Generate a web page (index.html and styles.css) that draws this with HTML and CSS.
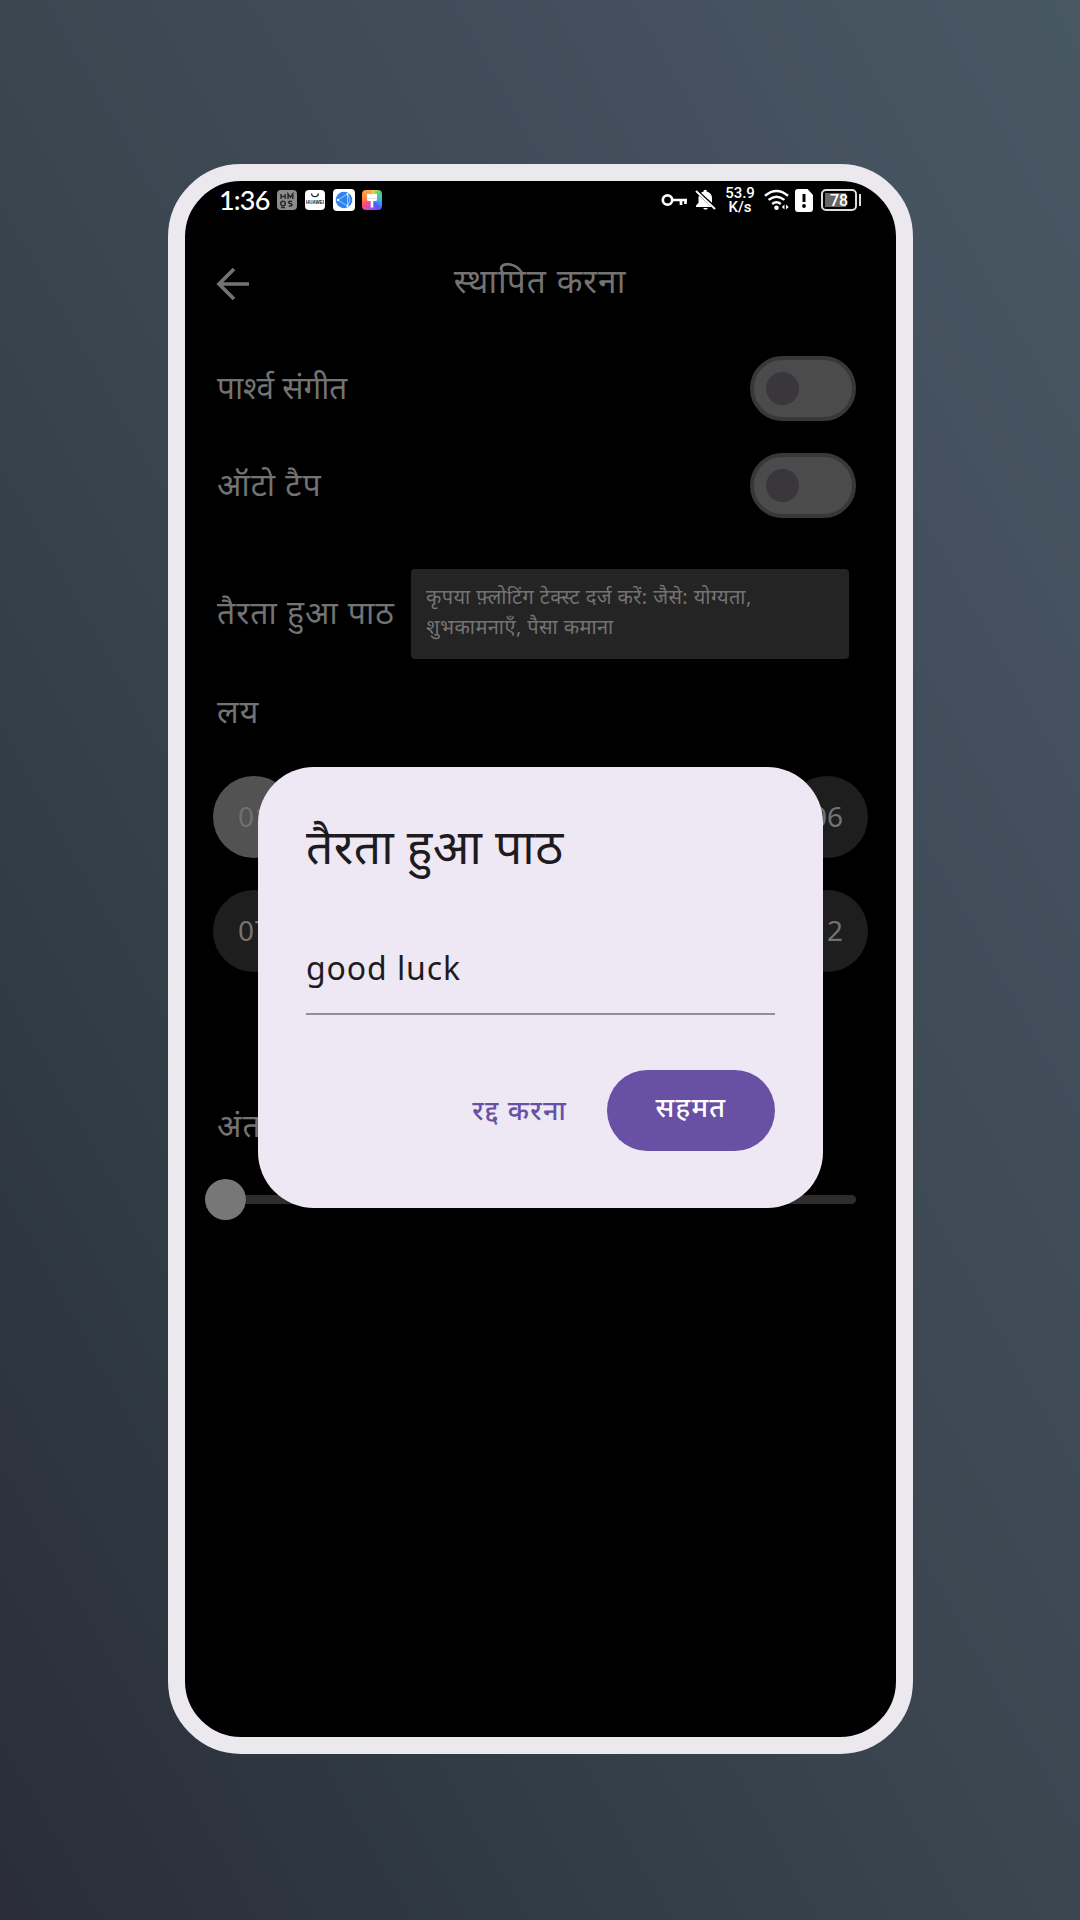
FILE: index.html
```html
<!DOCTYPE html>
<html lang="hi">
<head>
<meta charset="utf-8">
<title>स्थापित करना</title>
<link rel="stylesheet" href="styles.css">
</head>
<body>
<main class="phone">
  <header class="status">
    <span class="clock">1:36</span>
    <div class="apps">
      <svg width="20" height="20" viewBox="0 0 20 20"><rect width="20" height="20" rx="4" fill="#8c8c8c"/><g fill="none" stroke="#2b2b2b" stroke-width="1.500"><path d="M4 4v5M8.200 4v5M4 6.500h4.200M11 9V4l2.400 3.300L15.800 4v5"/><circle cx="6" cy="13.500" r="2.300"/><path d="M4 17.500h4M15 11.500c-4-1.200-4.500 2-1.700 2.100 2.800.2 2.200 3.200-1.500 2.100"/></g></svg>
      <svg width="20" height="20" viewBox="0 0 20 20"><rect width="20" height="20" rx="4" fill="#fff"/><path d="M6.500 3.500c.4 4.200 6.600 4.200 7 0" fill="none" stroke="#222" stroke-width="1.300"/><text x="10" y="14" text-anchor="middle" class="store">HUAWEI</text></svg>
      <svg width="22" height="22" viewBox="0 0 22 22"><rect width="22" height="22" rx="4" fill="#fff"/><circle cx="11" cy="11" r="8.300" fill="#2f83ee"/><path d="M5 11l9.500-6v12zM14.500 5L17 11l-2.500 6" fill="none" stroke="#a9d2ff" stroke-width=".9"/><circle cx="5" cy="11" r="1.200" fill="#fff"/><circle cx="14.500" cy="5" r="1" fill="#fff"/><circle cx="14.500" cy="17" r="1" fill="#fff"/></svg>
      <div class="theme"><svg width="20" height="20" viewBox="0 0 20 20"><path d="M5 4h10v5.500a1.500 1.500 0 0 1-1.500 1.500h-2.200v6.500H8.700V11H6.500A1.500 1.500 0 0 1 5 9.500z" fill="#fff"/><path d="M5 8.500h10" stroke="#ddd" stroke-width=".7"/></svg></div>
    </div>
    <div class="system">
      <svg class="key" width="27" height="14" viewBox="0 0 27 14"><g fill="none" stroke="#fff" stroke-width="2.700"><circle cx="6.500" cy="7" r="4.700"/><path d="M11 7h15M20 7v5M24.500 7v4"/></g></svg>
      <svg class="bell" width="21" height="22" viewBox="0 0 21 22"><path d="M4 6.500L16.500 18H1v-1.500l2.500-2.500V9q0-1.500.5-2.500zM6 3.800Q7.200 2.800 8.700 2.500V1.300q1.500-1.200 3 0v1.200Q17 4 17 9v4.800zM8 19h5q-2.500 3.500-5 0z" fill="#fff"/><path d="M1 2l19 18" stroke="#fff" stroke-width="1.900"/></svg>
      <div class="speed"><span>53.9</span><span>K/s</span></div>
      <svg class="wifi" width="26" height="22" viewBox="0 0 26 22"><g fill="none" stroke="#fff" stroke-width="2.500"><path d="M1 6.800q11.500-9.600 23 0M4.600 10.900q7.900-6.400 15.800 0M8.200 15q4.300-3.400 8.600 0"/></g><circle cx="12.500" cy="18.700" r="2.300" fill="#fff"/><path d="M20.500 15.500v5L17.800 18zM22 15.500v5l2.700-2.500z" fill="#fff"/></svg>
      <svg class="sim" width="18" height="23" viewBox="0 0 18 23"><path d="M3 0h9.500L18 6v14a3 3 0 0 1-3 3H3a3 3 0 0 1-3-3V3a3 3 0 0 1 3-3z" fill="#fff"/><path d="M9 5v8" stroke="#000" stroke-width="3"/><circle cx="9" cy="17" r="1.900"/></svg>
      <div class="battery"><span>78</span></div><i class="cap"></i>
    </div>
  </header>

  <nav class="appbar">
    <svg class="back" width="34" height="34" viewBox="0 0 34 34"><path d="M33 17H3M18 2L3 17l15 15" fill="none" stroke="#737373" stroke-width="3.700"/></svg>
    <h1>स्थापित करना</h1>
  </nav>

  <section class="row"><span class="label music">पार्श्व संगीत</span><div class="switch"></div></section>
  <section class="row"><span class="label">ऑटो टैप</span><div class="switch"></div></section>
  <section class="field">
    <span class="label">तैरता हुआ पाठ</span>
    <p class="input">कृपया फ़्लोटिंग टेक्स्ट दर्ज करें: जैसे: योग्यता,<br>शुभकामनाएँ, पैसा कमाना</p>
  </section>
  <div class="heading"><span class="label">लय</span></div>
  <div class="rhythms">
    <b class="on">01</b><b>02</b><b>03</b><b>04</b><b>05</b><b>06</b>
    <b>07</b><b>08</b><b>09</b><b>10</b><b>11</b><b>12</b>
  </div>
  <div class="interval"><span class="label">अंतराल</span></div>
  <div class="slider"><i></i><div class="track"></div></div>

  <div class="dialog">
    <h2>तैरता हुआ पाठ</h2>
    <div class="value">good luck</div>
    <div class="actions"><span class="cancel">रद्द करना</span><span class="ok">सहमत</span></div>
  </div>
</main>
</body>
</html>
```
FILE: styles.css
```css
* { box-sizing: border-box; margin: 0; padding: 0; }
body {
  width: 1080px;
  height: 1920px;
  overflow: hidden;
  padding: 164px 0 0 168px;
  background: linear-gradient(to top right, #2a2d39 0%, #303b44 25%, #3b4651 50%, #434e5c 75%, #485863 100%);
  font-family: "Noto Sans", "Noto Sans Devanagari", sans-serif;
  color: #737373;
}
svg { display: block; flex: none; }
.phone {
  position: relative;
  display: flex;
  flex-direction: column;
  width: 745px;
  height: 1590px;
  padding-right: 1px;
  border: 17px solid #ebe8ee;
  border-radius: 73px;
  background: #000;
}
.status {
  display: flex;
  align-items: center;
  height: 38px;
  padding: 0 34px 0 34px;
  color: #fff;
  flex: none;
}
.clock { width: 58px; font: 500 27px/38px Lato, sans-serif; letter-spacing: -.8px; white-space: nowrap; }
.apps { display: flex; align-items: center; gap: 8px; margin-right: auto; }
.apps svg:nth-child(3) { margin-right: -1px; }
.store { font: bold 4.500px "Liberation Sans", sans-serif; fill: #222; }
.theme {
  width: 20px;
  height: 20px;
  border-radius: 4px;
  background: conic-gradient(#ffd34d, #5bd06b 12%, #35b5f5 25%, #5b50f0 40%, #b04cf0 52%, #ff4e6e 68%, #ff8a3d 80%, #ffb04a);
}
.system { display: flex; align-items: center; }
.bell { margin-left: 7px; }
.speed {
  display: flex;
  flex-direction: column;
  width: 32px;
  margin-left: 8px;
  font: 500 15px/14px Roboto, sans-serif;
  text-align: center;
}
.wifi { margin-left: 8px; }
.sim { margin-left: 5px; }
.battery {
  width: 36px;
  height: 22px;
  margin-left: 8px;
  padding: 2px;
  border: 2px solid #ddd;
  border-radius: 5px;
}
.battery span {
  display: block;
  height: 14px;
  background: linear-gradient(90deg, #666 76%, #000 76%);
  font: 500 16px/15px Roboto, sans-serif;
  text-align: center;
}
.cap { width: 2px; height: 12px; margin-left: 2px; background: #ddd; }
.appbar {
  display: flex;
  align-items: center;
  height: 121px;
  padding: 9px 31px 0;
  flex: none;
}
h1 { flex: 1; padding: 0 34px 9px 0; font-size: 33.500px; line-height: 50px; font-weight: 400; letter-spacing: 1px; text-align: center; }
.label { padding-bottom: 4px; font-size: 32px; line-height: 50px; letter-spacing: .95px; white-space: nowrap; }
.music { letter-spacing: 0; font-size: 31.500px; }
.row {
  display: flex;
  align-items: center;
  justify-content: space-between;
  height: 97px;
  padding: 0 39px 0 32px;
  flex: none;
}
.switch {
  width: 106px;
  height: 65px;
  padding: 12px;
  border: 4px solid #39373c;
  border-radius: 33px;
  background: #4b4b4b;
}
.switch::before { content: ""; display: block; width: 33px; height: 33px; border-radius: 50%; background: #39373c; }
.field { display: flex; align-items: center; height: 90px; margin-top: 35px; padding: 0 46px 0 32px; flex: none; }
.input {
  width: 438px;
  height: 90px;
  margin-left: auto;
  padding: 13px 15px;
  border-radius: 4px;
  background: #242424;
  font-size: 20px;
  line-height: 30px;
  letter-spacing: .4px;
  white-space: nowrap;
}
.heading { display: flex; align-items: center; height: 117px; padding: 0 0 9px 32px; flex: none; }
.rhythms {
  display: grid;
  grid-template-columns: repeat(6, 82px);
  justify-content: space-between;
  row-gap: 32px;
  padding: 0 27px 0 28px;
}
b {
  height: 82px;
  border-radius: 50%;
  background: #1e1e1e;
  font-weight: 400;
  font-size: 28px;
  line-height: 81px;
  text-align: center;
}
b.on { background: #525252; color: #6f6f6f; }
.interval { height: 50px; margin: 128px 0 0 32px; flex: none; }
.slider { display: flex; align-items: center; height: 41px; margin: 29px 39px 0 20px; flex: none; }
.slider i { width: 41px; height: 41px; border-radius: 50%; background: #777; }
.track { flex: 1; height: 9px; border-radius: 0 5px 5px 0; background: #2d2d2d; }
.dialog {
  position: absolute;
  left: 72.5px;
  top: 586px;
  width: 565.5px;
  height: 440.5px;
  padding: 41px 48px 0 48.500px;
  border-radius: 56px;
  background: #eee8f4;
  color: #1d1b20;
}
h2 { font-size: 48px; line-height: 76px; font-weight: 400; letter-spacing: .4px; white-space: nowrap; }
.value {
  height: 90px;
  margin-top: 41px;
  padding-top: 13px;
  border-bottom: 2px solid #938f99;
  font-size: 32px;
  line-height: 60px;
  letter-spacing: .9px;
}
.actions { display: flex; align-items: center; justify-content: flex-end; gap: 40px; margin-top: 55px; color: #6850a4; font-size: 27px; font-weight: 500; letter-spacing: 1.3px; }
.cancel { padding-bottom: 3px; }
.ok { width: 168px; height: 81px; border-radius: 41px; background: #6850a4; color: #fff; line-height: 74px; text-align: center; }
```
